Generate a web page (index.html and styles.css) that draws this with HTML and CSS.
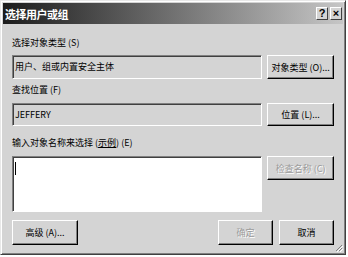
FILE: index.html
```html
<!DOCTYPE html>
<html lang="zh-CN">
<head>
  <meta charset="UTF-8" />
  <title>选择用户或组</title>
  <link rel="stylesheet" href="styles.css">
</head>
<body>

  <div class="window">
    <div class="titlebar">
      <span class="title">选择用户或组</span>
      <div class="title-buttons">
        <span class="tbtn">?</span>
        <span class="tbtn">×</span>
      </div>
    </div>

    <div class="content">
      <div class="label">选择对象类型 (<u>S</u>)</div>
      <div class="row">
        <div class="field readonly">用户、组或内置安全主体</div>
        <button class="btn">对象类型 (<u>O</u>)...</button>
      </div>

      <div class="label second">查找位置 (<u>F</u>)</div>
      <div class="row row-2">
        <div class="field readonly">JEFFERY</div>
        <button class="btn">位置 (<u>L</u>)...</button>
      </div>

      <div class="label third">输入对象名称来选择 (<span class="link">示例</span>) (<u>E</u>)</div>
      <div class="row row-3">
        <div class="field names"><span class="caret"></span></div>
        <button class="btn" disabled>检查名称 (C)</button>
      </div>

      <div class="footer">
        <button class="btn btn-adv">高级 (<u>A</u>)...</button>
        <div class="footer-right">
          <button class="btn btn-ok" disabled>确定</button>
          <button class="btn btn-ok">取消</button>
        </div>
      </div>
    </div>

    <svg class="grip" width="8" height="8" viewBox="0 0 8 8">
      <path d="M7 1 L1 7 M7 4 L4 7" stroke="#808080" stroke-width="1" />
      <path d="M8 2 L2 8 M8 5 L5 8" stroke="#ffffff" stroke-width="1" />
    </svg>
  </div>

</body>
</html>
```

FILE: styles.css
```css
body {
  margin: 0;
  background: #ffffff;
  font-family: "Noto Sans CJK SC", "Liberation Sans", sans-serif;
  font-size: 9px;
  color: #000;
}
u {
  text-decoration: none;
}
.window {
  position: relative;
  width: 346px;
  height: 255px;
  box-sizing: border-box;
  background: #d4d4d4;
  border: 1px solid;
  border-color: #e8e8e8 #404040 #404040 #e8e8e8;
  box-shadow: inset 1px 1px 0 #ffffff, inset -1px -1px 0 #808080;
  padding: 2px;
}
.titlebar {
  height: 21px;
  display: flex;
  align-items: center;
  justify-content: space-between;
  background: linear-gradient(to right, #1c1c1c, #c6c6c6);
  padding: 0 1px 0 2px;
}
.title {
  color: #fff;
  font-size: 11px;
  font-weight: 700;
  letter-spacing: -0.5px;
}
.title-buttons {
  display: flex;
  gap: 2px;
}
.tbtn {
  width: 12px;
  height: 13px;
  box-sizing: border-box;
  background: #d4d4d4;
  border: 1px solid;
  border-color: #fff #404040 #404040 #fff;
  font-family: "Liberation Sans", sans-serif;
  font-size: 11px;
  font-weight: 700;
  line-height: 11px;
  text-align: center;
}
.content {
  padding: 0 9px 0 9px;
}
.label {
  line-height: 12px;
  margin-top: 13px;
}
.label.second { margin-top: 5px; }
.label.third { margin-top: 11px; }
.link { text-decoration: underline; }
.row {
  display: flex;
  align-items: flex-start;
  gap: 5px;
  margin-top: 6px;
}
.row-2 { margin-top: 7px; }
.row-3 { margin-top: 7px; }
.field {
  width: 251px;
  height: 24px;
  box-sizing: border-box;
  border: 1px solid;
  border-color: #808080 #ffffff #ffffff #808080;
  box-shadow: inset 1px 1px 0 #404040;
  padding: 0 2px;
  line-height: 22px;
}
.row-2 .field { height: 23px; line-height: 21px; }
.field.names {
  height: 56px;
  background: #fff;
}
.caret {
  display: inline-block;
  width: 1px;
  height: 13px;
  background: #000;
  margin-top: 5px;
  vertical-align: top;
}
.btn {
  width: 67px;
  height: 24px;
  box-sizing: border-box;
  padding: 0;
  background: #d4d4d4;
  border: 1px solid;
  border-color: #ffffff #000000 #000000 #ffffff;
  box-shadow: inset -1px -1px 0 #808080;
  font-family: inherit;
  font-size: 9px;
  color: #000;
  white-space: nowrap;
}
.row-2 .btn { height: 23px; }
.btn:disabled {
  color: #9a9a9a;
  text-shadow: 1px 1px 0 #fff;
}
.footer {
  display: flex;
  justify-content: space-between;
  margin-top: 8px;
}
.footer .btn { height: 25px; }
.btn-adv { width: 66px; }
.footer-right {
  display: flex;
  gap: 6px;
}
.btn-ok { width: 55px; }
.grip {
  position: absolute;
  right: 2px;
  bottom: 2px;
}
```
